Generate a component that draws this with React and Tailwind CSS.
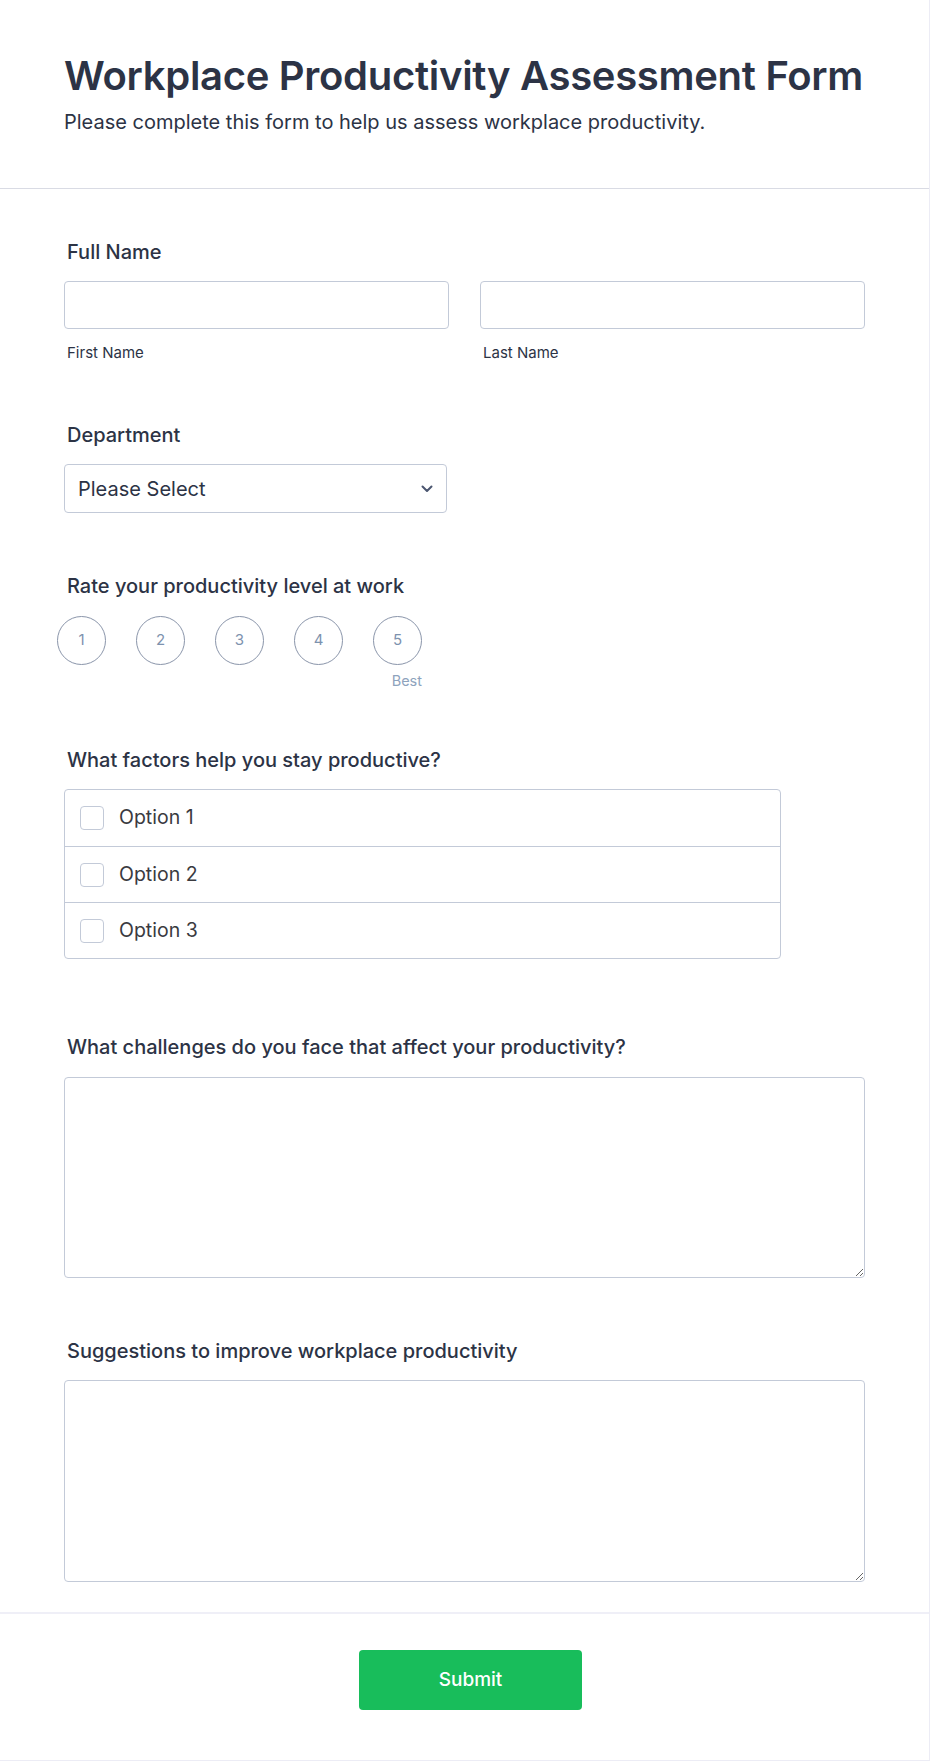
import React from "react";

function Label({ children, className = "" }) {
  return (
    <div className={"pl-[3px] text-[20px] leading-[24px] font-medium text-[#2c3345] " + className}>
      {children}
    </div>
  );
}

export default function App() {
  return (
    <div className="min-h-[1761px] bg-[#f3f3fe] font-['Inter',sans-serif]">
      <div className="w-[930px] bg-white border-r border-b border-[#ececf5]">
        {/* Header */}
        <div className="px-[64px] pt-[52px] pb-[54px] border-b border-[#d9dbe4]">
          <h1 className="text-[40px] leading-[48px] font-semibold text-[#2c3345] tracking-[-0.3px] whitespace-nowrap">
            Workplace Productivity Assessment Form
          </h1>
          <p className="mt-[10px] text-[20px] leading-[24px] text-[#2c3345]">
            Please complete this form to help us assess workplace productivity.
          </p>
        </div>

        {/* Body */}
        <div className="px-[64px] pt-[51px] pb-[30px]">
          {/* Full name */}
          <Label>Full Name</Label>
          <div className="mt-[17px] grid grid-cols-2 gap-x-[31px]">
            <div>
              <input className="block w-full h-[48px] rounded-[4px] border border-[#c3cad8] bg-white outline-none" />
              <div className="mt-[14px] pl-[3px] text-[15px] leading-[20px] text-[#2c3345]">First Name</div>
            </div>
            <div>
              <input className="block w-full h-[48px] rounded-[4px] border border-[#c3cad8] bg-white outline-none" />
              <div className="mt-[14px] pl-[3px] text-[15px] leading-[20px] text-[#2c3345]">Last Name</div>
            </div>
          </div>

          {/* Department */}
          <Label className="mt-[60px]">Department</Label>
          <div className="mt-[17px] w-[383px] h-[49px] rounded-[4px] border border-[#c3cad8] flex items-center justify-between pl-[13px] pr-[13px]">
            <span className="text-[20px] text-[#2c3345]">Please Select</span>
            <svg width="12" height="8" viewBox="0 0 12 8" fill="none">
              <path d="M1.5 1.5L6 6L10.5 1.5" stroke="#4b5670" strokeWidth="2" strokeLinecap="round" strokeLinejoin="round" />
            </svg>
          </div>

          {/* Rating */}
          <Label className="mt-[61px]">Rate your productivity level at work</Label>
          <div className="mt-[18px] ml-[-7px] flex gap-[30px]">
            {[1, 2, 3, 4, 5].map((n) => (
              <div key={n} className="flex flex-col items-end">
                <div className="w-[49px] h-[49px] rounded-full border border-[#8a95aa] flex items-center justify-center text-[15px] text-[#7d92ae]">
                  {n}
                </div>
                {n === 5 && (
                  <div className="mt-[6px] text-[14.5px] leading-[20px] text-[#8ea3bd]">Best</div>
                )}
              </div>
            ))}
          </div>

          {/* Checkboxes */}
          <Label className="mt-[57px]">What factors help you stay productive?</Label>
          <div className="mt-[17px] w-[717px] rounded-[4px] border border-[#c3cad8]">
            {["Option 1", "Option 2", "Option 3"].map((o, i) => (
              <div
                key={o}
                className={
                  "h-[56px] flex items-center pl-[15px] " +
                  (i > 0 ? "border-t border-[#c3cad8]" : "")
                }
              >
                <div className="w-[24px] h-[24px] rounded-[4px] border border-[#c3cad8] bg-white" />
                <span className="ml-[15px] text-[19.5px] text-[#3a3a3f]">{o}</span>
              </div>
            ))}
          </div>

          {/* Challenges */}
          <Label className="mt-[76px]">What challenges do you face that affect your productivity?</Label>
          <textarea className="mt-[18px] block w-full h-[201px] rounded-[4px] border border-[#c3cad8] bg-white outline-none" />

          {/* Suggestions */}
          <Label className="mt-[61px]">Suggestions to improve workplace productivity</Label>
          <textarea className="mt-[17px] block w-full h-[202px] rounded-[4px] border border-[#c3cad8] bg-white outline-none" />
        </div>

        {/* Footer */}
        <div className="border-t-2 border-[#efeff7] pt-[36px] pb-[50px] flex justify-center pl-[12px]">
          <button className="w-[223px] h-[60px] rounded-[4px] bg-[#18bd5b] text-white text-[19px] font-medium">
            Submit
          </button>
        </div>
      </div>
    </div>
  );
}
